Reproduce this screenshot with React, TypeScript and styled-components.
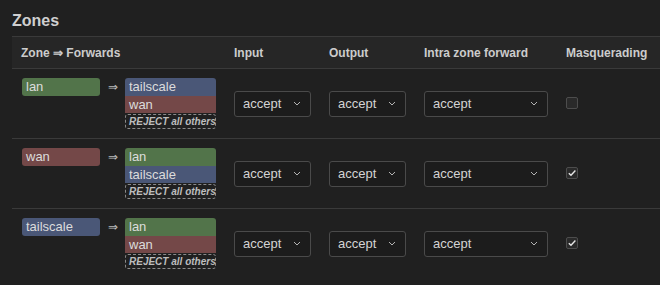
import React from "react";
import styled, { createGlobalStyle } from "styled-components";

const colors = {
    page: "#202020",
    head: "#262626",
    line: "#3a3a3a",
    text: "#d6d6d6",
    muted: "#b8b8b8",
    lan: "#52744a",
    wan: "#744848",
    tailscale: "#4a5777",
};

const GlobalStyle = createGlobalStyle`
    body {
        margin: 0;
        background: ${colors.page};
        font-family: "Liberation Sans", Arial, sans-serif;
        color: ${colors.text};
    }
`;

const Page = styled.div`
    padding: 11px 0 0 12px;
    height: 285px;
    box-sizing: border-box;
    overflow: hidden;
`;

const Title = styled.h2`
    margin: 0 0 6px;
    font-size: 16px;
    font-weight: bold;
    line-height: 19px;
    color: #cfcfcf;
`;

const Table = styled.table`
    width: 648px;
    border-collapse: collapse;
    table-layout: fixed;
`;

const HeadCell = styled.th<{ w?: number }>`
    box-sizing: border-box;
    ${props => (props.w ? `width: ${props.w}px;` : "")}
    height: 32px;
    padding: 0 9px;
    text-align: left;
    font-size: 12px;
    font-weight: bold;
    color: #cccccc;
    background: ${colors.head};
    border-top: 1px solid ${colors.line};
    border-bottom: 1px solid ${colors.line};
    white-space: nowrap;
`;

const Row = styled.tr`
    & + & td {
        border-top: 1px solid ${colors.line};
    }
`;

const Cell = styled.td`
    height: 51px;
    padding: 9px;
    vertical-align: middle;
`;

const ZoneCell = styled(Cell)`
    vertical-align: top;
    padding-left: 10px;
`;

const ZoneLine = styled.div`
    display: flex;
    align-items: flex-start;
`;

const Badge = styled.div<{ zone: string }>`
    box-sizing: border-box;
    height: 17px;
    padding: 0 4px;
    font-size: 13px;
    line-height: 17px;
    color: #dcdcdc;
    background: ${props => colors[props.zone as keyof typeof colors]};
    white-space: nowrap;
`;

const OwnBadge = styled(Badge)`
    width: 78px;
    height: 18px;
    line-height: 18px;
    border-radius: 3px;
`;

const Arrow = styled.span`
    width: 25px;
    text-align: center;
    font-size: 12px;
    line-height: 18px;
    color: #bbbbbb;
`;

const Stack = styled.div`
    display: flex;
    flex-direction: column;
    width: 91px;

    & > ${Badge}:first-child {
        height: 18px;
        line-height: 18px;
        border-radius: 3px 3px 0 0;
    }
`;

const Reject = styled.div`
    box-sizing: border-box;
    height: 15px;
    margin-top: 1px;
    padding: 0 3px;
    border: 1px dashed #8a8a8a;
    border-radius: 3px;
    font-size: 10px;
    font-weight: bold;
    font-style: italic;
    line-height: 13px;
    color: #bdbdbd;
    white-space: nowrap;
`;

const SelectBox = styled.div<{ w: number }>`
    box-sizing: border-box;
    display: flex;
    align-items: center;
    justify-content: space-between;
    width: ${props => props.w}px;
    height: 26px;
    padding: 0 9px 0 8px;
    background: #1c1c1c;
    border: 1px solid #4a4a4a;
    border-radius: 3px;
    font-size: 13px;
    color: #d4d4d4;
`;

const Check = styled.div`
    box-sizing: border-box;
    display: flex;
    align-items: center;
    justify-content: center;
    width: 12px;
    height: 12px;
    margin-top: -1px;
    background: #2a2a2a;
    border: 1px solid #4d4d4d;
    border-radius: 2px;
`;

type Zone = "lan" | "wan" | "tailscale";

type ZoneRow = {
    name: Zone;
    forwards: Zone[];
    masq: boolean;
};

const rows: ZoneRow[] = [
    { name: "lan", forwards: ["tailscale", "wan"], masq: false },
    { name: "wan", forwards: ["lan", "tailscale"], masq: true },
    { name: "tailscale", forwards: ["lan", "wan"], masq: true },
];

const Chevron = () => (
    <svg width="8" height="5" viewBox="0 0 8 5">
        <path d="M1 1 L4 4 L7 1" fill="none" stroke="#b4b4b4" strokeWidth="1" />
    </svg>
);

const Select = ({ w }: { w: number }) => (
    <SelectBox w={w}>
        <span>accept</span>
        <Chevron />
    </SelectBox>
);

const CheckMark = () => (
    <svg width="10" height="10" viewBox="0 0 10 10">
        <path d="M1.8 5.2 L4 7.3 L8.4 2.6" fill="none" stroke="#e6e6e6" strokeWidth="1.4" />
    </svg>
);

export default function App() {
    return (
        <Page>
            <GlobalStyle />
            <Title>Zones</Title>
            <Table>
                <thead>
                    <tr>
                        <HeadCell w={213}>Zone ⇒ Forwards</HeadCell>
                        <HeadCell w={95}>Input</HeadCell>
                        <HeadCell w={95}>Output</HeadCell>
                        <HeadCell w={142}>Intra zone forward</HeadCell>
                        <HeadCell>Masquerading</HeadCell>
                    </tr>
                </thead>
                <tbody>
                    {rows.map(row => (
                        <Row key={row.name}>
                            <ZoneCell>
                                <ZoneLine>
                                    <OwnBadge zone={row.name}>{row.name}</OwnBadge>
                                    <Arrow>⇒</Arrow>
                                    <Stack>
                                        {row.forwards.map(f => (
                                            <Badge key={f} zone={f}>
                                                {f}
                                            </Badge>
                                        ))}
                                        <Reject>REJECT all others</Reject>
                                    </Stack>
                                </ZoneLine>
                            </ZoneCell>
                            <Cell>
                                <Select w={77} />
                            </Cell>
                            <Cell>
                                <Select w={77} />
                            </Cell>
                            <Cell>
                                <Select w={124} />
                            </Cell>
                            <Cell>
                                <Check>{row.masq ? <CheckMark /> : null}</Check>
                            </Cell>
                        </Row>
                    ))}
                </tbody>
            </Table>
        </Page>
    );
}
